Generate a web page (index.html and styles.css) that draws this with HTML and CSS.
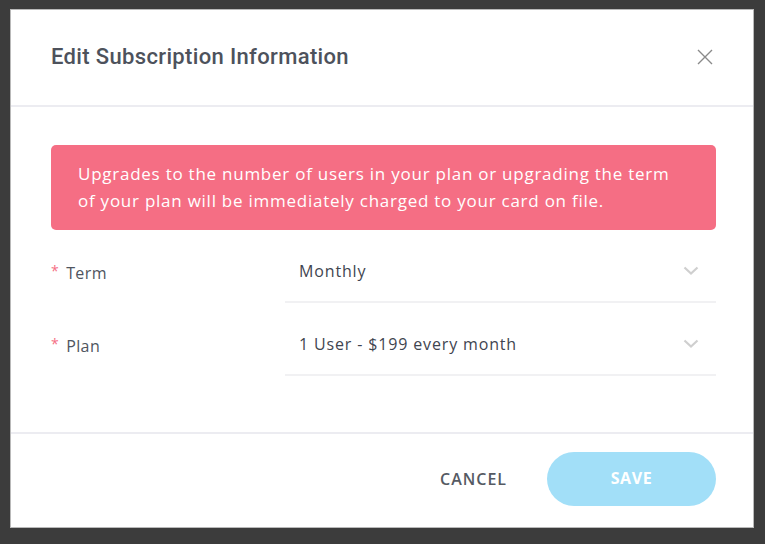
FILE: index.html
```html
<!DOCTYPE html>
<html>
<head>
<meta charset="utf-8">
<link rel="stylesheet" href="styles.css">
</head>
<body>
<div class="modal">
  <div class="modal-header">
    <h2 class="title">Edit Subscription Information</h2>
    <button class="close" aria-label="Close">
      <svg width="16" height="16" viewBox="0 0 16 16"><path d="M1 1L15 15M15 1L1 15" stroke="#8a8a8a" stroke-width="1.4" fill="none"/></svg>
    </button>
  </div>
  <div class="modal-body">
    <div class="alert">Upgrades to the number of users in your plan or upgrading the term of your plan will be immediately charged to your card on file.</div>
    <div class="field">
      <label class="label"><span class="req">*</span>Term</label>
      <div class="select"><span>Monthly</span>
        <svg class="chev" width="16" height="10" viewBox="0 0 16 10"><path d="M1.5 1.5L8 7.5L14.5 1.5" stroke="#cfcfcf" stroke-width="2.2" fill="none"/></svg>
      </div>
    </div>
    <div class="field">
      <label class="label"><span class="req">*</span>Plan</label>
      <div class="select"><span>1 User - $199 every month</span>
        <svg class="chev" width="16" height="10" viewBox="0 0 16 10"><path d="M1.5 1.5L8 7.5L14.5 1.5" stroke="#cfcfcf" stroke-width="2.2" fill="none"/></svg>
      </div>
    </div>
  </div>
  <div class="modal-footer">
    <button class="btn-cancel">CANCEL</button>
    <button class="btn-save">SAVE</button>
  </div>
</div>
</body>
</html>
```
FILE: styles.css
```css
html, body {
  margin: 0;
  padding: 0;
  background: #3c3c3c;
  height: 100%;
}
body {
  padding: 9px 0 0 10px;
  box-sizing: border-box;
  font-family: "Open Sans", sans-serif;
}
.modal {
  width: 744px;
  height: 519px;
  background: #fff;
  border: 1px solid #b9b9b9;
  box-sizing: border-box;
  display: flex;
  flex-direction: column;
}
.modal-header {
  height: 97px;
  border-bottom: 2px solid #ececf1;
  display: flex;
  align-items: center;
  justify-content: space-between;
  padding: 0 40px 0 40px;
  box-sizing: border-box;
  flex-shrink: 0;
}
.title {
  margin: 0;
  font-family: Roboto, sans-serif;
  font-weight: 500;
  font-size: 22px;
  color: #4d525c;
  letter-spacing: 0.35px;
  position: relative;
  top: -1px;
}
.close {
  background: none;
  border: 0;
  padding: 0;
  width: 16px;
  height: 16px;
  display: flex;
  position: relative;
  top: -1px;
}
.modal-body {
  flex: 1;
  padding: 38px 37px 0 40px;
}
.alert {
  background: #f56e84;
  color: #fff;
  border-radius: 5px;
  padding: 15px 30px 16px 27px;
  font-size: 17px;
  line-height: 27px;
  letter-spacing: 0.75px;
}
.field {
  display: flex;
  align-items: stretch;
  height: 73px;
}
.label {
  width: 234px;
  display: flex;
  align-items: center;
  font-size: 16px;
  color: #4f5560;
  letter-spacing: 0.4px;
  padding-top: 12px;
}
.req {
  color: #f56e84;
  font-size: 14px;
  margin-right: 7px;
  position: relative;
  top: -2px;
}
.select {
  flex: 1;
  border-bottom: 2px solid #f1f1f3;
  display: flex;
  align-items: center;
  justify-content: space-between;
  padding: 10px 17px 0 14px;
  font-size: 16px;
  color: #3f4550;
  letter-spacing: 0.85px;
}
.modal-footer {
  height: 95px;
  border-top: 2px solid #ececf1;
  display: flex;
  align-items: center;
  justify-content: flex-end;
  padding: 0 37px 0 0;
  box-sizing: border-box;
  flex-shrink: 0;
  gap: 40px;
}
.btn-cancel {
  background: none;
  border: 0;
  font-family: "Open Sans", sans-serif;
  font-size: 16px;
  font-weight: 600;
  color: #555a63;
  letter-spacing: 1px;
  padding: 0;
  position: relative;
  top: -2px;
}
.btn-save {
  width: 169px;
  height: 54px;
  border: 0;
  border-radius: 27px;
  background: #a2dff8;
  color: #fff;
  font-family: "Open Sans", sans-serif;
  font-weight: 700;
  font-size: 16px;
  letter-spacing: 0.6px;
  padding: 0 0 3px;
  margin-top: -3px;
}
```
